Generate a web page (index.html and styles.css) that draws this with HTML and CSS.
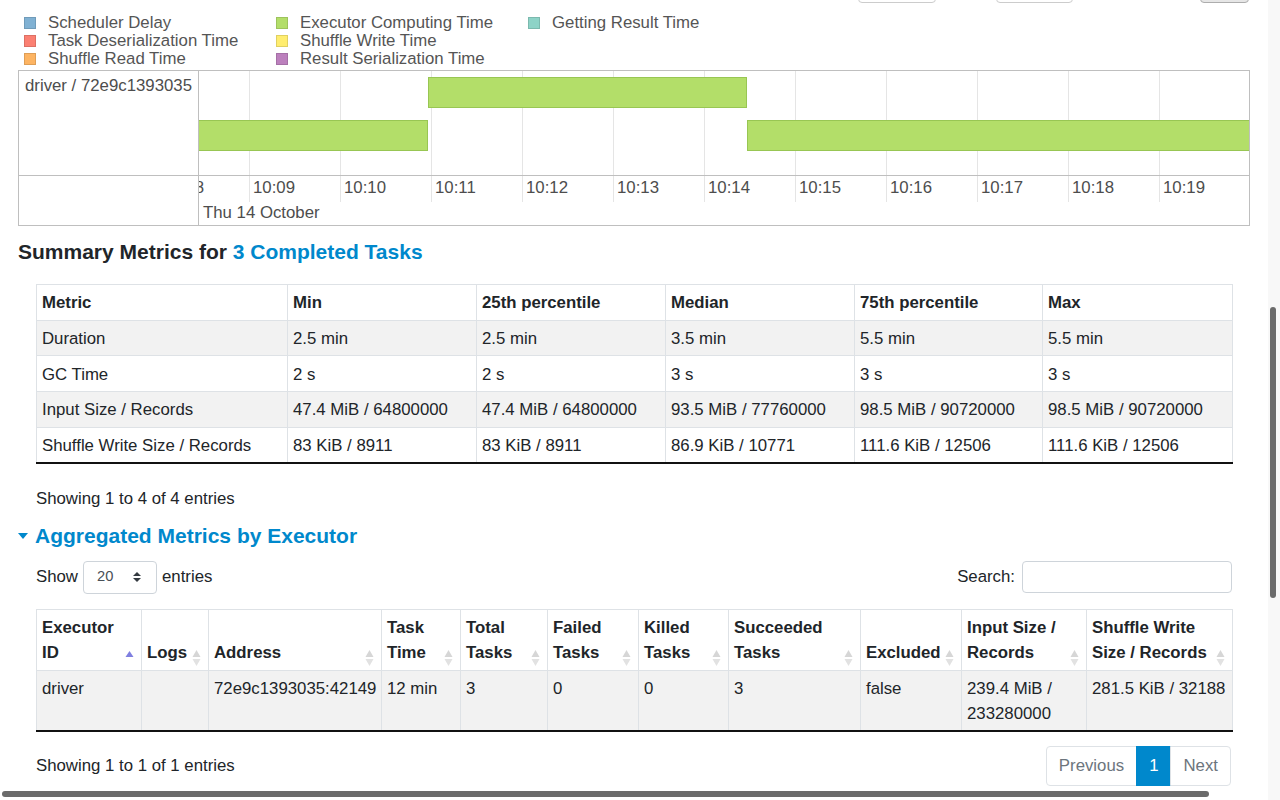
FILE: index.html
```html
<!DOCTYPE html>
<html>
<head>
<meta charset="utf-8">
<title>Stage details</title>
<link rel="stylesheet" href="styles.css">
</head>
<body>
<div class="page">
  <div class="controls">
    <span></span><span class="btn"></span><span></span><span class="btn"></span><span></span><span class="btn btn-gray"></span>
  </div>

  <div class="legend">
    <div class="legend-item"><span class="swatch sw-sched"></span>Scheduler Delay</div>
    <div class="legend-item"><span class="swatch sw-deser"></span>Task Deserialization Time</div>
    <div class="legend-item"><span class="swatch sw-sread"></span>Shuffle Read Time</div>
    <div class="legend-item"><span class="swatch sw-exec"></span>Executor Computing Time</div>
    <div class="legend-item"><span class="swatch sw-swrite"></span>Shuffle Write Time</div>
    <div class="legend-item"><span class="swatch sw-rser"></span>Result Serialization Time</div>
    <div class="legend-item"><span class="swatch sw-get"></span>Getting Result Time</div>
  </div>

  <div class="timeline">
    <div class="tl-label">driver / 72e9c1393035</div>
    <div class="tl-canvas">
      <div class="bar" style="left:-10px;top:49px;width:239px"></div>
      <div class="bar" style="left:229px;top:6px;width:319px"></div>
      <div class="bar" style="left:548px;top:49px;width:720px"></div>
    </div>
    <div class="tl-label-bottom"></div>
    <div class="tl-axis">
      <div class="ticks">
        <span class="tick">10:08</span><span class="tick">10:09</span><span class="tick">10:10</span><span class="tick">10:11</span><span class="tick">10:12</span><span class="tick">10:13</span><span class="tick">10:14</span><span class="tick">10:15</span><span class="tick">10:16</span><span class="tick">10:17</span><span class="tick">10:18</span><span class="tick">10:19</span>
      </div>
      <div class="date">Thu 14 October</div>
    </div>
  </div>

  <h4 class="sec-title">Summary Metrics for <a class="link">3 Completed Tasks</a></h4>
  <div class="indent">
    <table class="tbl summary">
      <colgroup><col class="c-metric"><col class="c-q"><col class="c-q"><col class="c-q"><col class="c-q2"><col class="c-q3"></colgroup>
      <thead>
        <tr><th>Metric</th><th>Min</th><th>25th percentile</th><th>Median</th><th>75th percentile</th><th>Max</th></tr>
      </thead>
      <tbody>
        <tr><td>Duration</td><td>2.5 min</td><td>2.5 min</td><td>3.5 min</td><td>5.5 min</td><td>5.5 min</td></tr>
        <tr><td>GC Time</td><td>2 s</td><td>2 s</td><td>3 s</td><td>3 s</td><td>3 s</td></tr>
        <tr><td>Input Size / Records</td><td>47.4 MiB / 64800000</td><td>47.4 MiB / 64800000</td><td>93.5 MiB / 77760000</td><td>98.5 MiB / 90720000</td><td>98.5 MiB / 90720000</td></tr>
        <tr><td>Shuffle Write Size / Records</td><td>83 KiB / 8911</td><td>83 KiB / 8911</td><td>86.9 KiB / 10771</td><td>111.6 KiB / 12506</td><td>111.6 KiB / 12506</td></tr>
      </tbody>
    </table>
    <div class="dt-info info-1">Showing 1 to 4 of 4 entries</div>
  </div>

  <h4 class="sec-title collapse-title"><span class="arrow-open"></span><a class="link">Aggregated Metrics by Executor</a></h4>
  <div class="indent">
    <div class="dt-top">
      <div class="dt-length">Show
        <div class="select"><span>20</span>
          <svg class="select-arrows" width="8" height="10" viewBox="0 0 4 5"><path d="M2 0L0 2h4zm0 5L0 3h4z" fill="#343a40"/></svg>
        </div>
        entries</div>
      <label class="dt-search">Search: <input type="search" class="search-input"></label>
    </div>

    <table class="tbl exec">
      <colgroup>
        <col class="e1"><col class="e2"><col class="e3"><col class="e4"><col class="e5"><col class="e6"><col class="e7"><col class="e8"><col class="e9"><col class="e10"><col class="e11">
      </colgroup>
      <thead>
        <tr>
          <th><div class="th"><span>Executor ID</span><svg class="sort" width="9" height="18" viewBox="0 0 9 18"><path class="asc" d="M4.5 2L8.5 8H0.5Z"/></svg></div></th>
          <th><div class="th"><span>Logs</span><svg class="sort" width="9" height="18" viewBox="0 0 9 18"><path class="up" d="M4.5 1L8.5 8H0.5Z"/><path class="down" d="M0.5 10H8.5L4.5 17Z"/></svg></div></th>
          <th><div class="th"><span>Address</span><svg class="sort" width="9" height="18" viewBox="0 0 9 18"><path class="up" d="M4.5 1L8.5 8H0.5Z"/><path class="down" d="M0.5 10H8.5L4.5 17Z"/></svg></div></th>
          <th><div class="th"><span>Task Time</span><svg class="sort" width="9" height="18" viewBox="0 0 9 18"><path class="up" d="M4.5 1L8.5 8H0.5Z"/><path class="down" d="M0.5 10H8.5L4.5 17Z"/></svg></div></th>
          <th><div class="th"><span>Total Tasks</span><svg class="sort" width="9" height="18" viewBox="0 0 9 18"><path class="up" d="M4.5 1L8.5 8H0.5Z"/><path class="down" d="M0.5 10H8.5L4.5 17Z"/></svg></div></th>
          <th><div class="th"><span>Failed Tasks</span><svg class="sort" width="9" height="18" viewBox="0 0 9 18"><path class="up" d="M4.5 1L8.5 8H0.5Z"/><path class="down" d="M0.5 10H8.5L4.5 17Z"/></svg></div></th>
          <th><div class="th"><span>Killed Tasks</span><svg class="sort" width="9" height="18" viewBox="0 0 9 18"><path class="up" d="M4.5 1L8.5 8H0.5Z"/><path class="down" d="M0.5 10H8.5L4.5 17Z"/></svg></div></th>
          <th><div class="th"><span>Succeeded Tasks</span><svg class="sort" width="9" height="18" viewBox="0 0 9 18"><path class="up" d="M4.5 1L8.5 8H0.5Z"/><path class="down" d="M0.5 10H8.5L4.5 17Z"/></svg></div></th>
          <th><div class="th"><span>Excluded</span><svg class="sort" width="9" height="18" viewBox="0 0 9 18"><path class="up" d="M4.5 1L8.5 8H0.5Z"/><path class="down" d="M0.5 10H8.5L4.5 17Z"/></svg></div></th>
          <th><div class="th"><span>Input Size / Records</span><svg class="sort" width="9" height="18" viewBox="0 0 9 18"><path class="up" d="M4.5 1L8.5 8H0.5Z"/><path class="down" d="M0.5 10H8.5L4.5 17Z"/></svg></div></th>
          <th><div class="th"><span>Shuffle Write Size / Records</span><svg class="sort" width="9" height="18" viewBox="0 0 9 18"><path class="up" d="M4.5 1L8.5 8H0.5Z"/><path class="down" d="M0.5 10H8.5L4.5 17Z"/></svg></div></th>
        </tr>
      </thead>
      <tbody>
        <tr><td>driver</td><td></td><td>72e9c1393035:42149</td><td>12 min</td><td>3</td><td>0</td><td>0</td><td>3</td><td>false</td><td>239.4 MiB / 233280000</td><td>281.5 KiB / 32188</td></tr>
      </tbody>
    </table>

    <div class="dt-bottom">
      <div class="dt-info">Showing 1 to 1 of 1 entries</div>
      <ul class="pagination">
        <li class="page-item disabled"><span class="page-link">Previous</span></li>
        <li class="page-item active"><span class="page-link">1</span></li>
        <li class="page-item disabled"><span class="page-link">Next</span></li>
      </ul>
    </div>
  </div>
</div>

<div class="vtrack"><div class="vthumb"></div></div>
<div class="hthumb"></div>
</body>
</html>
```

FILE: styles.css
```css
* { box-sizing: border-box; }

html, body {
  margin: 0;
  padding: 0;
  height: 100%;
  overflow: hidden;
}

body {
  font-family: "Liberation Sans", Arial, Helvetica, sans-serif;
  font-size: 16.8px;
  line-height: 25.2px;
  color: #212529;
  background: #fff;
}

.page {
  width: 1268px;
  padding: 0 18px;
  margin-top: -27px;
}

/* cut-off controls at the very top */
.controls {
  display: grid;
  grid-template-columns: 840px 78px 60px 77px 127px 49px;
  height: 30px;
}
.btn {
  border: 1px solid #ccc;
  border-radius: 4px;
  background: #fff;
}
.btn-gray {
  background: #e6e6e6;
  border-color: #adadad;
}

/* legend */
.legend {
  display: grid;
  grid-template-columns: 252px 252px 252px;
  grid-template-rows: repeat(3, 18px);
  grid-auto-flow: column;
  padding: 11px 0 0 6px;
  line-height: 18px;
  color: #555;
}
.legend-item {
  display: flex;
  align-items: center;
  gap: 12px;
  white-space: nowrap;
}
.swatch {
  width: 12px;
  height: 12px;
  border: 1px solid rgba(0, 0, 0, 0.12);
}
.sw-sched { background: #80b1d3; }
.sw-deser { background: #fb8072; }
.sw-sread { background: #fdb462; }
.sw-exec { background: #b3de69; }
.sw-swrite { background: #ffed6f; }
.sw-rser { background: #bc80bd; }
.sw-get { background: #8dd3c7; }

/* timeline */
.timeline {
  margin-top: 2px;
  height: 156px;
  border: 1px solid #bfbfbf;
  display: grid;
  grid-template-columns: 180px 1fr;
  grid-template-rows: 105px 49px;
  color: #4d4d4d;
}
.tl-label {
  border-right: 1px solid #bfbfbf;
  border-bottom: 1px solid #bfbfbf;
  padding: 2px 0 0 6px;
  white-space: nowrap;
}
.tl-label-bottom {
  border-right: 1px solid #bfbfbf;
}
.tl-canvas {
  position: relative;
  overflow: hidden;
  border-bottom: 1px solid #bfbfbf;
  background-image: repeating-linear-gradient(to right, transparent 0, transparent 90px, #e5e5e5 90px, #e5e5e5 91px);
  background-position: -40px 0;
}
.bar {
  position: absolute;
  height: 31px;
  background: #b3de69;
  border: 1px solid #98c653;
}
.tl-axis {
  overflow: hidden;
}
.ticks {
  display: flex;
  margin-left: -41px;
  height: 26px;
}
.tick {
  flex: 0 0 91px;
  border-left: 1px solid #e5e5e5;
  padding: 2px 0 0 3px;
  line-height: 20px;
  white-space: nowrap;
}
.date {
  padding-left: 4px;
  line-height: 20px;
  padding-top: 1px;
}

/* headings */
.sec-title {
  margin: 13px 0 20px;
  font-size: 21px;
  line-height: 25.2px;
  font-weight: bold;
  color: #212529;
}
.link {
  color: #0088cc;
  text-decoration: none;
}
.collapse-title {
  display: flex;
  align-items: center;
  gap: 7px;
  margin: 11.5px 0 12.5px;
}
.arrow-open {
  width: 0;
  height: 0;
  border-left: 5.5px solid transparent;
  border-right: 5.5px solid transparent;
  border-top: 6px solid #0088cc;
  margin-top: 2px;
}

.indent {
  margin: 0 18px;
}

/* tables */
.tbl {
  width: 100%;
  border-collapse: collapse;
  table-layout: fixed;
}
.tbl th,
.tbl td {
  border: 1px solid #dee2e6;
  padding: 4.8px 5px;
  text-align: left;
  vertical-align: top;
  font-weight: normal;
}
.summary th,
.summary td {
  padding: 4.7px 5px;
}
.summary tbody td {
  padding-top: 5.2px;
  padding-bottom: 4.2px;
}
.tbl th {
  font-weight: bold;
  vertical-align: bottom;
}
.tbl tbody tr:nth-child(odd) td {
  background: #f2f2f2;
}
.tbl tbody tr:last-child td {
  border-bottom: 2px solid #111;
}

.c-metric { width: 251px; }
.c-q { width: 189px; }
.c-q2 { width: 188px; }
.c-q3 { width: 190px; }

.e1 { width: 105px; }
.e2 { width: 67px; }
.e3 { width: 173px; }
.e4 { width: 79px; }
.e5 { width: 87px; }
.e6 { width: 91px; }
.e7 { width: 90px; }
.e8 { width: 132px; }
.e9 { width: 101px; }
.e10 { width: 125px; }
.e11 { width: 146px; }

.exec th {
  padding-top: 5.3px;
  padding-bottom: 4.3px;
}
.exec td {
  padding-top: 5.3px;
  padding-bottom: 3.6px;
}

.th {
  display: flex;
  justify-content: space-between;
  align-items: flex-end;
  gap: 3px;
}
.sort {
  flex: 0 0 9px;
  margin-bottom: -2px;
  margin-right: 2px;
}
.sort .up { fill: #d6d6d6; }
.sort .down { fill: #e2e2e2; }
.sort .asc { fill: #7f7fe0; }

.dt-info {
  color: #212529;
}
.info-1 {
  margin-top: 22px;
}

/* datatable top controls */
.dt-top {
  display: flex;
  justify-content: space-between;
  align-items: center;
  height: 33px;
  margin-bottom: 15px;
}
.dt-length {
  display: flex;
  align-items: center;
  gap: 5px;
}
.select {
  display: flex;
  align-items: center;
  justify-content: space-between;
  width: 74px;
  height: 33px;
  padding: 0 15px 0 13px;
  border: 1px solid #ced4da;
  border-radius: 4px;
  font-size: 14.7px;
  color: #495057;
}
.dt-search {
  display: flex;
  align-items: center;
  gap: 7px;
}
.search-input {
  width: 210px;
  height: 32px;
  border: 1px solid #ced4da;
  border-radius: 4px;
  font: inherit;
  padding: 0 8px;
  outline: none;
}

/* bottom */
.dt-bottom {
  display: flex;
  justify-content: space-between;
  align-items: center;
  margin-top: 14px;
}
.pagination {
  display: flex;
  list-style: none;
  margin: 0 1px 0 0;
  padding: 0;
}
.page-link {
  display: block;
  padding: 7.5px 12px;
  line-height: 23.4px;
  border: 1px solid #dee2e6;
  margin-left: -1px;
  color: #6c757d;
  background: #fff;
}
.page-item:first-child .page-link {
  border-radius: 4px 0 0 4px;
  margin-left: 0;
}
.page-item:last-child .page-link {
  border-radius: 0 4px 4px 0;
}
.page-item.active .page-link {
  background: #0088cc;
  border-color: #0088cc;
  color: #fff;
}

/* scrollbars (overlay) */
.vtrack {
  position: fixed;
  top: 0;
  right: 0;
  width: 12px;
  height: 100%;
  background: #f8f8f8;
}
.vthumb {
  position: absolute;
  left: 2px;
  top: 307px;
  width: 6px;
  height: 291px;
  border-radius: 3px;
  background: #6b6b6b;
}
.hthumb {
  position: fixed;
  left: 2px;
  top: 791px;
  width: 1207px;
  height: 6px;
  border-radius: 3px;
  background: #6b6b6b;
}
```
